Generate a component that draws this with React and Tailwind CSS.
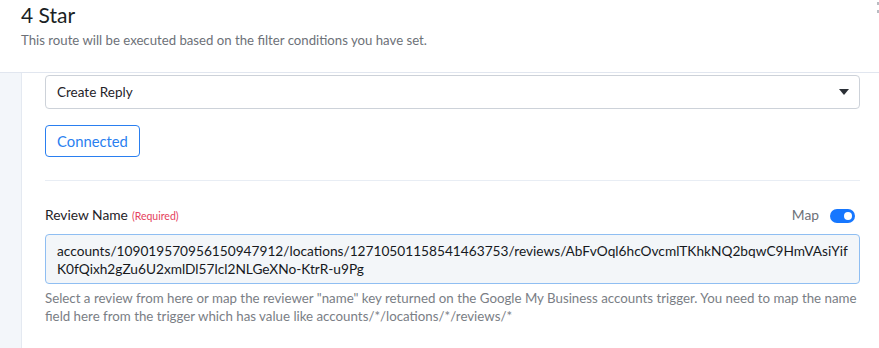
import React, { useState } from "react";

const App = () => {
  const [mapOn, setMapOn] = useState(true);

  return (
    <div className="relative w-[879px] h-[348px] overflow-hidden bg-white font-['Lato','Liberation_Sans',sans-serif] text-[#1f2329]">
      {/* Header */}
      <div className="h-[73px] border-b border-[#e1e6ef] pl-[21px] pt-[1px]">
        <h1 className="text-[21px] leading-[28px] text-[#1b1f24]">4 Star</h1>
        <p className="mt-[3px] text-[13.2px] leading-[16px] text-[#6d7178]">
          This route will be executed based on the filter conditions you have set.
        </p>
      </div>
      {/* close icon clipped at the edge */}
      <div className="absolute right-0 top-[2px] flex flex-col gap-[5px]">
        <span className="block w-[2px] h-[3px] bg-[#b9bcc2]" />
        <span className="block w-[2px] h-[3px] bg-[#b9bcc2]" />
      </div>

      <div className="flex h-[275px]">
        <div className="w-[22px] shrink-0 bg-[#f3f6fa] border-r border-[#e4e9f1]" />
        <div className="flex-1 pl-[23px] pr-[19px]">
          {/* Select */}
          <div className="mt-[2px] h-[34px] flex items-center justify-between rounded-[4px] border border-[#cdd2d9] pl-[11px] pr-[9px]">
            <span className="text-[13.5px] text-[#1f2329]">Create Reply</span>
            <svg width="10" height="6" viewBox="0 0 10 6" className="mr-[1px]">
              <path d="M0 0 H10 L5 6 Z" fill="#2b2f35" />
            </svg>
          </div>

          {/* Connected button */}
          <button className="mt-[16px] h-[32px] px-[11px] rounded-[4px] border border-[#2a7ff0] text-[14.8px] text-[#2a7ff0] bg-white">
            Connected
          </button>

          <div className="mt-[23px] h-px bg-[#e8edf4]" />

          {/* Review Name label row */}
          <div className="mt-[26px] flex items-center justify-between h-[17px]">
            <div className="flex items-baseline gap-[4px]">
              <span className="text-[13.8px] text-[#1f2329]">Review Name</span>
              <span className="text-[10.5px] text-[#e5415c]">(Required)</span>
            </div>
            <div className="flex items-center gap-[11px] pr-[5px]">
              <span className="text-[13.8px] text-[#6d7178]">Map</span>
              <button
                onClick={() => setMapOn((v) => !v)}
                className={`relative w-[25px] h-[14px] rounded-full ${mapOn ? "bg-[#1677ff]" : "bg-[#c9ced6]"}`}
              >
                <span
                  className={`absolute top-[3px] w-[8px] h-[8px] rounded-full bg-white ${mapOn ? "right-[3px]" : "left-[3px]"}`}
                />
              </button>
            </div>
          </div>

          {/* Textarea */}
          <div className="mt-[10px] h-[50px] overflow-hidden rounded-[4px] border border-[#8fbef2] bg-[#f3f6f9] pl-[11px] pt-[7px] text-[13.7px] leading-[18px] text-[#16191d] whitespace-nowrap">
            <div>accounts/109019570956150947912/locations/12710501158541463753/reviews/AbFvOql6hcOvcmlTKhkNQ2bqwC9HmVAsiYif</div>
            <div>K0fQixh2gZu6U2xmlDl57lcl2NLGeXNo-KtrR-u9Pg</div>
          </div>

          {/* Help text */}
          <p className="mt-[5px] text-[13.3px] leading-[18px] text-[#7a7e85]">
            Select a review from here or map the reviewer "name" key returned on the Google My Business accounts trigger. You need to map the name field here from the trigger which has value like accounts/*/locations/*/reviews/*
          </p>
        </div>
      </div>
    </div>
  );
};

export default App;
